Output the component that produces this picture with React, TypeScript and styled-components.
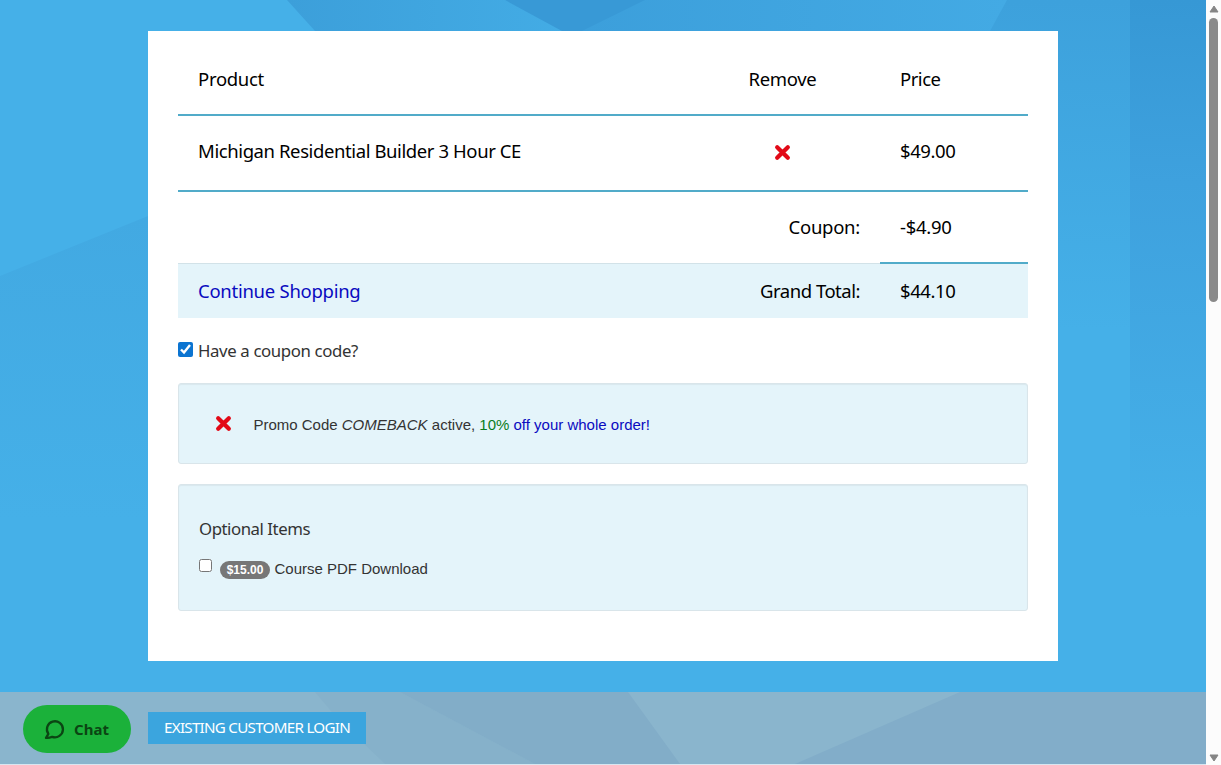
import React from "react";
import styled, { createGlobalStyle } from "styled-components";

const humanist = `"Noto Sans", "Open Sans", sans-serif`;
const arial = `"Liberation Sans", Arial, sans-serif`;

const GlobalStyle = createGlobalStyle`
  * { box-sizing: border-box; }
  body { margin: 0; overflow: hidden; background: #45b0e8; color: #333; font-family: ${arial}; font-size: 15px; }
`;

const Window = styled.div`
  display: flex;
  height: 765px;
  overflow: hidden;
`;

const Viewport = styled.div`
  position: relative;
  flex: 1;
  display: flex;
  flex-direction: column;
  background: #45b0e8;
`;

const Backdrop = styled.svg`
  position: absolute;
  inset: 0;
  width: 100%;
  height: 692px;
`;

const Main = styled.main`
  position: relative;
  height: 692px;
  padding-top: 31px;
`;

const Card = styled.section`
  width: 910px;
  height: 630px;
  margin-left: 148px;
  padding: 11px 30px 0;
  background: #fff;
`;

const CartTable = styled.div`
  font-family: ${humanist};
  color: #000;
`;

const Row = styled.div<{ $h: number; $rule?: boolean; $total?: boolean; $top?: number; $bottom?: number }>`
  display: grid;
  grid-template-columns: 1fr 148px;
  height: ${(p) => p.$h}px;
  padding: ${(p) => p.$top ?? 0}px 0 ${(p) => p.$bottom ?? 0}px;
  align-items: center;
  border-bottom: ${(p) => (p.$rule ? "2px solid #51abc9" : "0")};
  background: ${(p) => (p.$total ? "#e4f4fa" : "transparent")};
`;

const ProductCells = styled.div`
  display: grid;
  grid-template-columns: 1fr 131.5px;
  padding-left: 20px;
  align-items: center;
`;

const Text = styled.span<{ $w: number; $size?: number }>`
  display: inline-block;
  width: ${(p) => p.$w}px;
  font-family: ${humanist};
  font-size: ${(p) => p.$size ?? 18.5}px;
  line-height: 28px;
  white-space: nowrap;
`;

const RemoveCell = styled.div`
  display: flex;
  padding: 3px 0 0 25px;
`;

const SummaryCells = styled.div<{ $rule?: boolean }>`
  display: flex;
  align-items: center;
  justify-content: space-between;
  height: 100%;
  padding: 0 20px ${(p) => (p.$rule ? 2 : 0)}px;
  border-bottom: ${(p) => (p.$rule ? "1px solid #d2e2e8" : "0")};
`;

const PriceCell = styled.div<{ $rule?: boolean }>`
  height: 100%;
  display: flex;
  align-items: center;
  padding-left: 20px;
  border-bottom: ${(p) => (p.$rule ? "2px solid #51abc9" : "0")};
`;

const Link = styled.a`
  color: #0a0ac0;
  text-decoration: none;
`;

const IconButton = styled.button`
  display: flex;
  padding: 0;
  border: 0;
  background: none;
`;

const CouponToggle = styled.label`
  display: flex;
  align-items: center;
  height: 65px;
  gap: 5px;
`;

const Checkbox = styled.input<{ $size: number; $lift: number }>`
  width: ${(p) => p.$size}px;
  height: ${(p) => p.$size}px;
  margin: 0 0 ${(p) => p.$lift}px;
  accent-color: #0b74d1;
`;

const Well = styled.div<{ $h: number }>`
  height: ${(p) => p.$h}px;
  margin-bottom: 20px;
  border: 1px solid #d9e5ea;
  border-radius: 3px;
  background: #e4f4fa;
  box-shadow: inset 0 1px 1px rgba(0, 0, 0, 0.05);
`;

const PromoRow = styled.div`
  display: flex;
  align-items: center;
  height: 100%;
  padding: 0 0 0 36.4px;
  gap: 21px;
`;

const PromoText = styled.span`
  padding-top: 2px;
  font-size: 15px;
  white-space: nowrap;
`;

const OptionText = styled.span`
  font-size: 15px;
  white-space: nowrap;
`;

const Percent = styled.span`
  color: #0a7d1c;
`;

const Options = styled.div`
  display: flex;
  flex-direction: column;
  padding: 30px 20px 0;
`;

const OptionRow = styled.label`
  display: flex;
  align-items: center;
  margin-top: 13px;
  height: 24px;
`;

const PriceBadge = styled.span`
  width: 50px;
  height: 18px;
  margin: 3px 4.5px 0 8px;
  border-radius: 9px;
  background: #777;
  color: #fff;
  font-size: 12px;
  font-weight: 700;
  line-height: 18px;
  text-align: center;
`;

const FooterBar = styled.footer`
  position: relative;
  display: flex;
  align-items: center;
  height: 73px;
  padding-left: 23px;
  gap: 17px;
  background: #8ab5cd;
  border-bottom: 1px solid #d9e6f0;
`;

const FooterShapes = styled.svg`
  position: absolute;
  inset: 0;
  width: 100%;
  height: 100%;
`;

const ChatButton = styled.button`
  position: relative;
  display: flex;
  align-items: center;
  width: 108px;
  height: 48px;
  margin-top: 2px;
  padding: 0 0 0 21px;
  gap: 9px;
  border: 0;
  border-radius: 24px;
  background: #1bb13a;
  color: #0b4513;
  font-weight: 700;
`;

const LoginButton = styled.button`
  position: relative;
  width: 218px;
  height: 32px;
  padding: 0 0 2px 16px;
  border: 0;
  background: #3ba5de;
  color: #fff;
  text-align: left;
`;

const ScrollTrack = styled.aside`
  width: 15px;
  display: flex;
  flex-direction: column;
  align-items: center;
  padding: 5px 0 3px;
  background: #fcfcfc;
`;

const ScrollThumb = styled.div`
  width: 9px;
  height: 284px;
  margin: 5px 0 auto;
  border-radius: 5px;
  background: #8a8a8a;
`;

function Label({ children, w, size = 18.5 }: { children: string; w: number; size?: number }) {
  const ref = React.useRef<HTMLSpanElement>(null);
  const [spacing, setSpacing] = React.useState(0);
  React.useLayoutEffect(() => {
    const range = document.createRange();
    range.selectNodeContents(ref.current!);
    setSpacing((w - range.getBoundingClientRect().width) / children.length);
  }, []);
  return <Text ref={ref} $w={w} $size={size} style={{ letterSpacing: spacing }}>{children}</Text>;
}

function RemoveIcon() {
  return (
    <IconButton aria-label="Remove">
      <svg width="17" height="17" viewBox="0 0 16 16">
        <path d="M3 3L13 13M13 3L3 13" stroke="#e20a17" strokeWidth="4" strokeLinecap="round" />
      </svg>
    </IconButton>
  );
}

function Arrow({ down }: { down?: boolean }) {
  return (
    <svg width="10" height="8" viewBox="0 0 10 8">
      <path d={down ? "M1 1H9L5 7Z" : "M1 7H9L5 1Z"} fill="#858585" stroke="#858585" strokeLinejoin="round" />
    </svg>
  );
}

export default function App() {
  return (
    <Window>
      <GlobalStyle />
      <Viewport>
        <Backdrop viewBox="0 0 1206 692" preserveAspectRatio="none">
          <defs>
            <linearGradient id="right" x1="0" y1="0" x2="0" y2="1">
              <stop offset="0" stopColor="#3698d5" />
              <stop offset=".35" stopColor="#3ea1de" />
              <stop offset="1" stopColor="#45b0e8" />
            </linearGradient>
            <linearGradient id="mid" x1="0" y1="0" x2="0" y2="1">
              <stop offset="0" stopColor="#3da1dc" />
              <stop offset="1" stopColor="#45b0e8" />
            </linearGradient>
            <linearGradient id="left" x1="0" y1="0" x2="0" y2="1">
              <stop offset="0" stopColor="#42a9e2" />
              <stop offset="1" stopColor="#45b0e8" />
            </linearGradient>
            <linearGradient id="topA">
              <stop offset="0" stopColor="#3c9fda" />
              <stop offset="1" stopColor="#43ace5" />
            </linearGradient>
            <linearGradient id="topB">
              <stop offset="0" stopColor="#3c9fdb" />
              <stop offset="1" stopColor="#43aae4" />
            </linearGradient>
          </defs>
          <path d="M0 276L148 216V520H0Z" fill="url(#left)" />
          <path d="M990 0H1130V330H990Z" fill="url(#mid)" />
          <path d="M287 0H505L568 31H315Z" fill="url(#topA)" />
          <path d="M505 0H648L585 31H562Z" fill="#3899d6" />
          <path d="M645 0H1007L990 31H582Z" fill="url(#topB)" />
          <path d="M1130 0H1206V520H1130Z" fill="url(#right)" />
        </Backdrop>
        <Main>
          <Card>
            <CartTable>
              <Row $h={74} $rule $top={2}>
                <ProductCells>
                  <Label w={66}>Product</Label>
                  <Label w={68}>Remove</Label>
                </ProductCells>
                <PriceCell><Label w={40.5}>Price</Label></PriceCell>
              </Row>
              <Row $h={76} $rule $bottom={5}>
                <ProductCells>
                  <Label w={323}>Michigan Residential Builder 3 Hour CE</Label>
                  <RemoveCell><RemoveIcon /></RemoveCell>
                </ProductCells>
                <PriceCell><Label w={55.5}>$49.00</Label></PriceCell>
              </Row>
              <Row $h={72}>
                <SummaryCells $rule><span /><Label w={71.5}>Coupon:</Label></SummaryCells>
                <PriceCell $rule><Label w={51.5}>-$4.90</Label></PriceCell>
              </Row>
              <Row $h={54} $total>
                <SummaryCells>
                  <Link><Label w={162.5}>Continue Shopping</Label></Link>
                  <Label w={100}>Grand Total:</Label>
                </SummaryCells>
                <PriceCell><Label w={55.5}>$44.10</Label></PriceCell>
              </Row>
            </CartTable>
            <CouponToggle>
              <Checkbox $size={15} $lift={2} type="checkbox" defaultChecked />
              <Label w={160} size={16.8}>Have a coupon code?</Label>
            </CouponToggle>
            <Well $h={81}>
              <PromoRow>
                <RemoveIcon />
                <PromoText>
                  Promo Code <em>COMEBACK</em> active, <Percent>10%</Percent> <Link>off your whole order!</Link>
                </PromoText>
              </PromoRow>
            </Well>
            <Well $h={127}>
              <Options>
                <Label w={111} size={16.8}>Optional Items</Label>
                <OptionRow>
                  <Checkbox $size={13} $lift={6} type="checkbox" />
                  <PriceBadge>$15.00</PriceBadge>
                  <OptionText>Course PDF Download</OptionText>
                </OptionRow>
              </Options>
            </Well>
          </Card>
        </Main>
        <FooterBar>
          <FooterShapes viewBox="0 0 1206 73" preserveAspectRatio="none">
            <path d="M315 0H400L535 73H385L335 24Z" fill="#86b1ca" />
            <path d="M400 0H628L680 73H535Z" fill="#82adc8" />
            <path d="M960 0H1206V73H795Z" fill="#82adc9" />
          </FooterShapes>
          <ChatButton>
            <svg width="21" height="21" viewBox="0 0 21 21" fill="none" stroke="#0b4513" strokeWidth="2.3" strokeLinejoin="round">
              <path d="M2 18.8L4.4 14.9A8 8 0 1 1 8.2 17.8Q5 19.2 2 18.8Z" />
            </svg>
            <Label w={35} size={15}>Chat</Label>
          </ChatButton>
          <LoginButton><Label w={186} size={15.2}>EXISTING CUSTOMER LOGIN</Label></LoginButton>
        </FooterBar>
      </Viewport>
      <ScrollTrack><Arrow /><ScrollThumb /><Arrow down /></ScrollTrack>
    </Window>
  );
}
